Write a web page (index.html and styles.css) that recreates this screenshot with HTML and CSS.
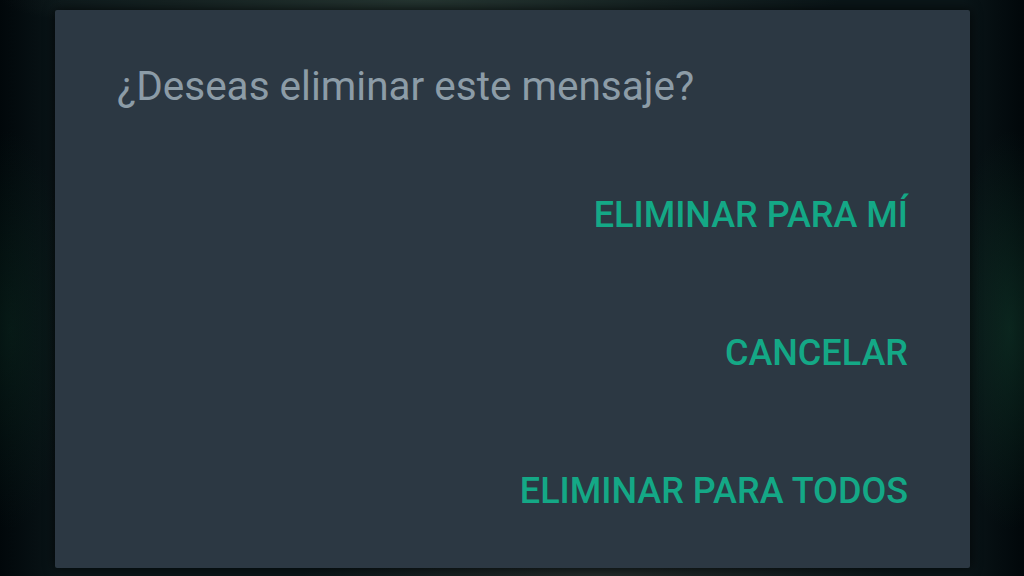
FILE: index.html
```html
<!DOCTYPE html>
<html lang="es">
<head>
<meta charset="utf-8">
<title>Eliminar mensaje</title>
<link rel="stylesheet" href="styles.css">
</head>
<body>
<div class="backdrop">
  <div class="dialog" role="dialog">
    <p class="title">¿Deseas eliminar este mensaje?</p>
    <div class="actions">
      <button class="btn">ELIMINAR PARA MÍ</button>
      <button class="btn">CANCELAR</button>
      <button class="btn">ELIMINAR PARA TODOS</button>
    </div>
  </div>
</div>
</body>
</html>
```
FILE: styles.css
```css
html, body {
  margin: 0;
  padding: 0;
  width: 1024px;
  height: 576px;
  overflow: hidden;
}
body {
  font-family: Roboto, "Noto Sans", "Liberation Sans", sans-serif;
  background: #02080a;
}
.backdrop {
  width: 1024px;
  height: 576px;
  box-sizing: border-box;
  padding: 10px 54px 8px 55px;
  background:
    radial-gradient(ellipse 60px 200px at 1010px 330px, rgba(20, 70, 50, 0.45), transparent),
    radial-gradient(ellipse 60px 200px at 10px 330px, rgba(15, 55, 40, 0.35), transparent),
    radial-gradient(ellipse 420px 40px at 420px 0px, rgba(60, 80, 70, 0.55), transparent),
    radial-gradient(ellipse 300px 30px at 600px 576px, rgba(60, 65, 60, 0.5), transparent),
    linear-gradient(90deg, #01070a 0%, #0a1518 6%, #0a1518 94%, #01070a 100%);
}
.dialog {
  height: 100%;
  box-sizing: border-box;
  background: #2c3843;
  border-radius: 2px;
  padding: 53px 62px 0 62px;
  display: flex;
  flex-direction: column;
  box-shadow: 0 0 12px rgba(0, 0, 0, 0.7);
}
.title {
  margin: 0;
  font-size: 40.5px;
  line-height: 46px;
  font-weight: 400;
  color: #8c9ca7;
}
.actions {
  margin-top: 85px;
  display: flex;
  flex-direction: column;
  align-items: flex-end;
  gap: 96px;
}
.btn {
  font-family: inherit;
  background: none;
  border: 0;
  padding: 0;
  margin: 0;
  font-size: 36px;
  line-height: 42px;
  font-weight: 500;
  color: #14a886;
}
```
